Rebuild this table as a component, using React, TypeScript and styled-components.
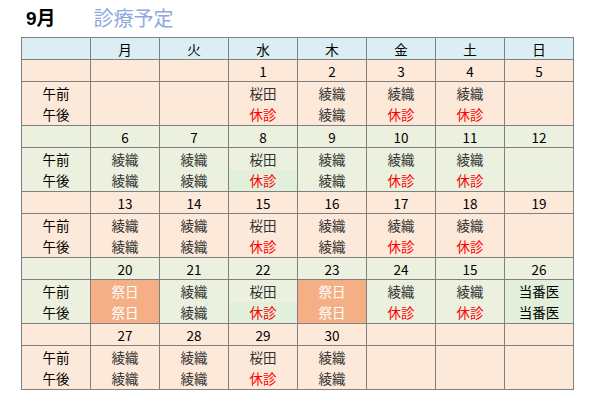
import React from "react";
import styled, { createGlobalStyle } from "styled-components";

const Global = createGlobalStyle`
  html, body { margin: 0; padding: 0; background: #ffffff; }
  body { font-family: "Noto Sans CJK JP", "Noto Sans", sans-serif; }
`;

const Page = styled.div`
  padding: 0 0 0 21px;
  width: 596px;
  box-sizing: border-box;
`;

const TitleBar = styled.div`
  height: 37px;
  display: flex;
  align-items: center;
  padding-left: 5px;
  gap: 38px;
`;

const Month = styled.span`
  font-family: "Liberation Sans", "Noto Sans CJK JP", sans-serif;
  font-weight: 700;
  font-size: 19px;
  color: #000;
  line-height: 1;
`;

const Subtitle = styled.span`
  font-family: "Noto Sans CJK JP", sans-serif;
  font-size: 20px;
  color: #8ea9db;
  line-height: 1;
  margin-top: -1px;
`;

const Table = styled.div`
  display: grid;
  grid-template-columns: repeat(8, 1fr);
  grid-auto-rows: auto;
  gap: 1px;
  padding: 1px;
  background: #808080;
  width: 553px;
  box-sizing: border-box;
  font-size: 13.5px;
`;

const HeadCell = styled.div`
  height: 21px;
  background: #daeef3;
  display: flex;
  align-items: center;
  justify-content: center;
  color: #000;
`;

const DateCell = styled.div<{ $bg: string }>`
  height: 21px;
  background: ${(p) => p.$bg};
  display: flex;
  align-items: center;
  justify-content: center;
  color: #000;
  font-family: "Noto Sans CJK JP", sans-serif;
`;

const SlotCell = styled.div<{ $bg: string }>`
  height: 43px;
  background: ${(p) => p.$bg};
  display: grid;
  grid-template-rows: 1fr 1fr;
`;

const Line = styled.div<{ $color: string; $bg?: string }>`
  display: flex;
  align-items: center;
  justify-content: center;
  color: ${(p) => p.$color};
  background: ${(p) => p.$bg || "transparent"};
`;

const PEACH = "#fde9d9";
const GREEN = "#ebf1de";
const LIGHTGREEN = "#e2efda";
const HOLIDAY = "#f4b084";

type Entry = { text: string; bg?: string };
type Week = {
  bg: string;
  dates: string[];
  am: Entry[];
  pm: Entry[];
  holiday?: number[];
};

const e = (text: string, bg?: string): Entry => ({ text, bg });

const weeks: Week[] = [
  {
    bg: PEACH,
    dates: ["", "", "1", "2", "3", "4", "5"],
    am: [e(""), e(""), e("桜田"), e("綾織"), e("綾織"), e("綾織"), e("")],
    pm: [e(""), e(""), e("休診"), e("綾織"), e("休診"), e("休診"), e("")],
  },
  {
    bg: GREEN,
    dates: ["6", "7", "8", "9", "10", "11", "12"],
    am: [e("綾織"), e("綾織"), e("桜田"), e("綾織"), e("綾織"), e("綾織"), e("")],
    pm: [e("綾織"), e("綾織"), e("休診", LIGHTGREEN), e("綾織"), e("休診"), e("休診"), e("")],
  },
  {
    bg: PEACH,
    dates: ["13", "14", "15", "16", "17", "18", "19"],
    am: [e("綾織"), e("綾織"), e("桜田"), e("綾織"), e("綾織"), e("綾織"), e("")],
    pm: [e("綾織"), e("綾織"), e("休診"), e("綾織"), e("休診"), e("休診"), e("")],
  },
  {
    bg: GREEN,
    dates: ["20", "21", "22", "23", "24", "15", "26"],
    am: [e("祭日"), e("綾織"), e("桜田"), e("祭日"), e("綾織"), e("綾織"), e("当番医", LIGHTGREEN)],
    pm: [e("祭日"), e("綾織"), e("休診", LIGHTGREEN), e("祭日"), e("休診"), e("休診"), e("当番医", LIGHTGREEN)],
    holiday: [0, 3],
  },
  {
    bg: PEACH,
    dates: ["27", "28", "29", "30", "", "", ""],
    am: [e("綾織"), e("綾織"), e("桜田"), e("綾織"), e(""), e(""), e("")],
    pm: [e("綾織"), e("綾織"), e("休診"), e("綾織"), e(""), e(""), e("")],
  },
];

const days = ["月", "火", "水", "木", "金", "土", "日"];

const colorFor = (text: string, holiday: boolean) => {
  if (holiday) return "#ffffff";
  if (text === "休診") return "#ff0000";
  if (text === "当番医") return "#000000";
  return "#333333";
};

export default function App() {
  return (
    <>
      <Global />
      <Page>
        <TitleBar>
          <Month>9月</Month>
          <Subtitle>診療予定</Subtitle>
        </TitleBar>
        <Table>
          <HeadCell />
          {days.map((d) => (
            <HeadCell key={d}>{d}</HeadCell>
          ))}
          {weeks.map((w, wi) => (
            <React.Fragment key={wi}>
              <DateCell $bg={w.bg} />
              {w.dates.map((d, i) => (
                <DateCell key={i} $bg={w.bg}>
                  {d}
                </DateCell>
              ))}
              <SlotCell $bg={w.bg}>
                <Line $color="#000">午前</Line>
                <Line $color="#000">午後</Line>
              </SlotCell>
              {w.am.map((a, i) => {
                const hol = !!w.holiday?.includes(i);
                const p = w.pm[i];
                return (
                  <SlotCell key={i} $bg={hol ? HOLIDAY : w.bg}>
                    <Line $color={colorFor(a.text, hol)} $bg={a.bg}>
                      {a.text}
                    </Line>
                    <Line $color={colorFor(p.text, hol)} $bg={p.bg}>
                      {p.text}
                    </Line>
                  </SlotCell>
                );
              })}
            </React.Fragment>
          ))}
        </Table>
      </Page>
    </>
  );
}
